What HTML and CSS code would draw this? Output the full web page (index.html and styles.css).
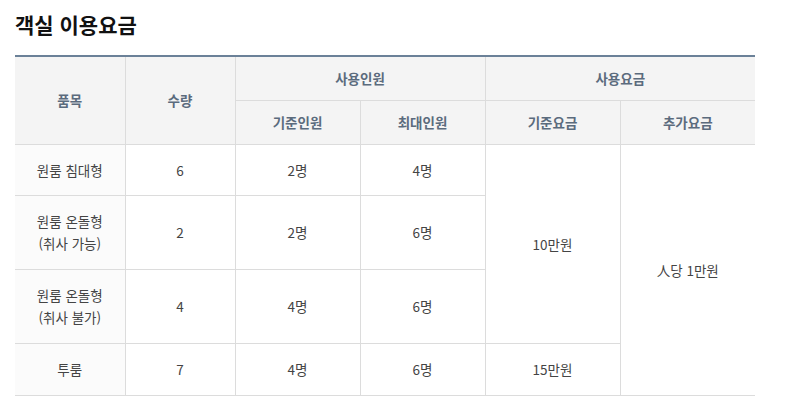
FILE: index.html
```html
<!DOCTYPE html>
<html lang="ko">
<head>
<meta charset="utf-8">
<link rel="stylesheet" href="styles.css">
</head>
<body>
<div class="page">
  <h2 class="title">객실 이용요금</h2>
  <table class="fee">
    <colgroup>
      <col class="c-name">
      <col class="c-qty">
      <col class="c-ppl">
      <col class="c-ppl">
      <col class="c-fee">
      <col class="c-fee">
    </colgroup>
    <thead>
      <tr class="h1">
        <th rowspan="2">품목</th>
        <th rowspan="2">수량</th>
        <th colspan="2">사용인원</th>
        <th colspan="2">사용요금</th>
      </tr>
      <tr class="h2">
        <th>기준인원</th>
        <th>최대인원</th>
        <th>기준요금</th>
        <th>추가요금</th>
      </tr>
    </thead>
    <tbody>
      <tr class="r1">
        <td class="name">원룸 침대형</td>
        <td>6</td>
        <td>2명</td>
        <td>4명</td>
        <td rowspan="3">10만원</td>
        <td rowspan="4" class="end">人당 1만원</td>
      </tr>
      <tr class="r2">
        <td class="name">원룸 온돌형<br>(취사 가능)</td>
        <td>2</td>
        <td>2명</td>
        <td>6명</td>
      </tr>
      <tr class="r2">
        <td class="name">원룸 온돌형<br>(취사 불가)</td>
        <td>4</td>
        <td>4명</td>
        <td>6명</td>
      </tr>
      <tr class="r3">
        <td class="name">투룸</td>
        <td>7</td>
        <td>4명</td>
        <td>6명</td>
        <td>15만원</td>
      </tr>
    </tbody>
  </table>
</div>
</body>
</html>
```

FILE: styles.css
```css
html, body {
  margin: 0;
  padding: 0;
  background: #fff;
}
.page {
  padding: 9px 15px 0 15px;
  font-family: "Noto Sans CJK KR", "Noto Sans", sans-serif;
}
.title {
  margin: 0 0 16px 0;
  font-size: 21px;
  line-height: 30px;
  font-weight: 700;
  color: #111;
}
.fee {
  width: 740px;
  border-collapse: collapse;
  table-layout: fixed;
  border-top: 2px solid #6b8198;
  border-bottom: 1px solid #6b8198;
  font-size: 13.5px;
}
.c-name, .c-qty { width: 110px; }
.c-ppl { width: 125px; }
.c-fee { width: 135px; }
.fee th, .fee td {
  padding: 0;
  text-align: center;
  vertical-align: middle;
  border: 1px solid #dcdcdc;
  line-height: 22px;
}
.fee tr > :first-child { border-left: none; }
.fee tr > :last-child { border-right: none; }
.fee td.end { border-right: none; }
.fee th {
  background: #f4f4f4;
  color: #5b6b7d;
  font-weight: 700;
}
.fee td {
  color: #444;
  font-weight: 400;
}
.fee td.name {
  background: #fbfbfb;
}
.h1 { height: 44px; }
.h2 { height: 44px; }
.r1 { height: 51px; }
.r2 { height: 74px; }
.r3 { height: 52px; }
```
